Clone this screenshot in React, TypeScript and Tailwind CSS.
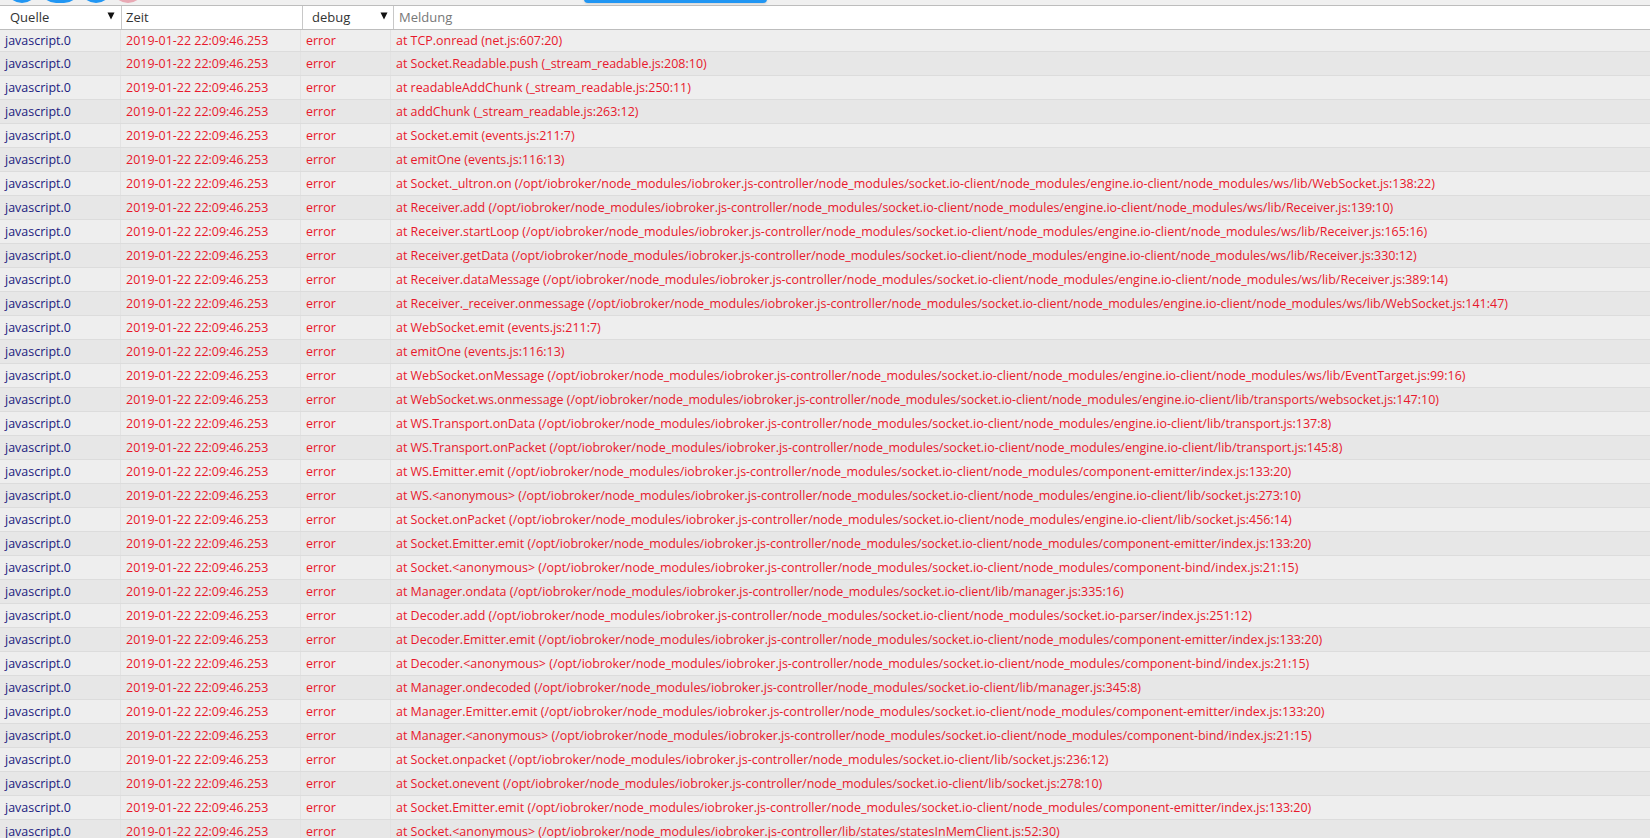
const MODULES = '/opt/iobroker/node_modules/iobroker.js-controller/node_modules/'
const CLIENT = MODULES + 'socket.io-client/node_modules/'
const ENGINE = CLIENT + 'engine.io-client/'

const MESSAGES = [
  'at TCP.onread (net.js:607:20)',
  'at Socket.Readable.push (_stream_readable.js:208:10)',
  'at readableAddChunk (_stream_readable.js:250:11)',
  'at addChunk (_stream_readable.js:263:12)',
  'at Socket.emit (events.js:211:7)',
  'at emitOne (events.js:116:13)',
  `at Socket._ultron.on (${ENGINE}node_modules/ws/lib/WebSocket.js:138:22)`,
  `at Receiver.add (${ENGINE}node_modules/ws/lib/Receiver.js:139:10)`,
  `at Receiver.startLoop (${ENGINE}node_modules/ws/lib/Receiver.js:165:16)`,
  `at Receiver.getData (${ENGINE}node_modules/ws/lib/Receiver.js:330:12)`,
  `at Receiver.dataMessage (${ENGINE}node_modules/ws/lib/Receiver.js:389:14)`,
  `at Receiver._receiver.onmessage (${ENGINE}node_modules/ws/lib/WebSocket.js:141:47)`,
  'at WebSocket.emit (events.js:211:7)',
  'at emitOne (events.js:116:13)',
  `at WebSocket.onMessage (${ENGINE}node_modules/ws/lib/EventTarget.js:99:16)`,
  `at WebSocket.ws.onmessage (${ENGINE}lib/transports/websocket.js:147:10)`,
  `at WS.Transport.onData (${ENGINE}lib/transport.js:137:8)`,
  `at WS.Transport.onPacket (${ENGINE}lib/transport.js:145:8)`,
  `at WS.Emitter.emit (${CLIENT}component-emitter/index.js:133:20)`,
  `at WS.<anonymous> (${ENGINE}lib/socket.js:273:10)`,
  `at Socket.onPacket (${ENGINE}lib/socket.js:456:14)`,
  `at Socket.Emitter.emit (${CLIENT}component-emitter/index.js:133:20)`,
  `at Socket.<anonymous> (${CLIENT}component-bind/index.js:21:15)`,
  `at Manager.ondata (${MODULES}socket.io-client/lib/manager.js:335:16)`,
  `at Decoder.add (${CLIENT}socket.io-parser/index.js:251:12)`,
  `at Decoder.Emitter.emit (${CLIENT}component-emitter/index.js:133:20)`,
  `at Decoder.<anonymous> (${CLIENT}component-bind/index.js:21:15)`,
  `at Manager.ondecoded (${MODULES}socket.io-client/lib/manager.js:345:8)`,
  `at Manager.Emitter.emit (${CLIENT}component-emitter/index.js:133:20)`,
  `at Manager.<anonymous> (${CLIENT}component-bind/index.js:21:15)`,
  `at Socket.onpacket (${MODULES}socket.io-client/lib/socket.js:236:12)`,
  `at Socket.onevent (${MODULES}socket.io-client/lib/socket.js:278:10)`,
  `at Socket.Emitter.emit (${CLIENT}component-emitter/index.js:133:20)`,
  'at Socket.<anonymous> (/opt/iobroker/node_modules/iobroker.js-controller/lib/states/statesInMemClient.js:52:30)',
]

function Caret() {
  return (
    <svg width="8" height="8" viewBox="0 0 8 8" className="mb-[3px] shrink-0">
      <polygon points="0.5,0.5 7.5,0.5 4,7.5" fill="#111" />
    </svg>
  )
}

export default function App() {
  return (
    <div className="h-[838px] w-[1650px] overflow-hidden bg-[#f0f0f0] font-['Open_Sans','Noto_Sans',sans-serif] text-[12.47px]">
      {/* toolbar, scrolled almost out of view */}
      <div className="relative h-[5px] overflow-hidden">
        <div className="absolute left-[6px] top-[-29px] size-[32px] rounded-full bg-[#2196f3]" />
        <div className="absolute left-[40px] top-[-29px] h-[32px] w-[40px] rounded-full bg-[#2196f3]" />
        <div className="absolute left-[80px] top-[-29px] size-[32px] rounded-full bg-[#2196f3]" />
        <div className="absolute left-[112px] top-[-29px] size-[32px] rounded-full bg-[#e8a9b4]" />
        <div className="absolute left-[584px] top-[-10px] h-[13px] w-[183px] rounded-sm bg-[#2196f3] shadow-sm" />
      </div>

      <div className="flex h-[25px] items-center border-y border-[#bdbdbd] bg-white text-[13px] text-[#333]">
        <div className="flex h-full w-[122px] items-center justify-between border-r border-[#c8c8c8] pl-[10px] pr-[6px]">
          <span>Quelle</span>
          <Caret />
        </div>
        <div className="flex h-full w-[181px] items-center border-r border-[#c8c8c8] pl-[4px]">Zeit</div>
        <div className="flex h-full w-[91px] items-center justify-between border-r border-[#c8c8c8] pl-[9px] pr-[5px]">
          <span>debug</span>
          <Caret />
        </div>
        <div className="flex h-full flex-1 items-center pl-[5px] text-[#777]">Meldung</div>
      </div>

      {MESSAGES.map((message, i) => (
        <div
          key={i}
          className={`flex items-center border-b border-[#dcdcdc] ${i === 0 ? 'h-[22px]' : 'h-[24px]'} ${i % 2 === 0 ? 'bg-[#eeeeee]' : 'bg-[#e7e7e7]'}`}
        >
          <div className="flex h-full w-[121px] shrink-0 items-center border-r border-[#e2e2e2] pl-[5px] pt-[2px] text-[#1c1c80]">javascript.0</div>
          <div className="flex h-full w-[180px] shrink-0 items-center border-r border-[#e2e2e2] pl-[5px] pt-[2px] text-[#e8182c]">2019-01-22 22:09:46.253</div>
          <div className="flex h-full w-[90px] shrink-0 items-center border-r border-[#e2e2e2] pl-[5px] pt-[2px] text-[#e8182c]">error</div>
          <div className="flex h-full flex-1 items-center whitespace-nowrap pl-[5px] pt-[2px] text-[#e8182c]">{message}</div>
        </div>
      ))}
    </div>
  )
}
